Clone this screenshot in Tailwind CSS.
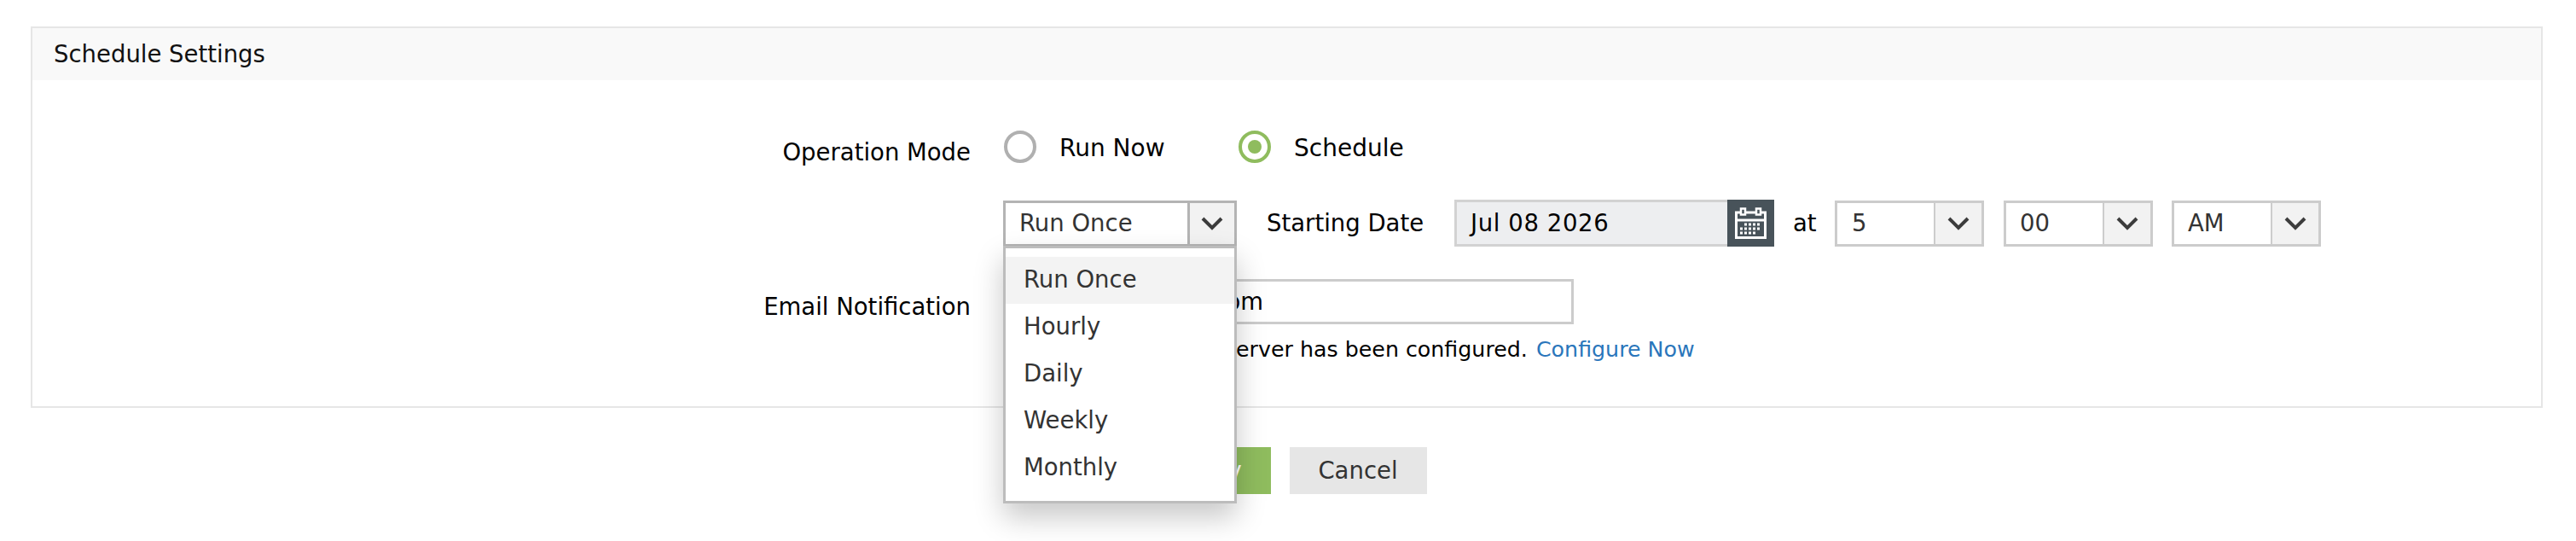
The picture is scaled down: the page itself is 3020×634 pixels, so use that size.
<!doctype html>
<html>
<head>
<meta charset="utf-8">
<script src="https://cdn.jsdelivr.net/npm/@tailwindcss/browser@4"></script>
</head>
<body class="bg-white font-['DejaVu_Sans',sans-serif] text-[27.5px] text-black overflow-hidden">
<div class="pl-[36px] pr-[39px] pt-[31px] h-[634px]">
  <section class="border-2 border-[#e6e6e6] h-[447px]">
    <header class="h-[61px] bg-[#f9f9f9] pl-[25px] flex items-center text-[#111]">Schedule Settings</header>
    <div class="grid grid-cols-[1100px_1fr] gap-x-[38px] pt-[59px]">
      <div class="text-right pt-[7px] h-[38px] leading-[36px]">Operation Mode</div>
      <div class="flex items-center h-[38px] pl-[1px]">
        <span class="w-[38px] h-[38px] rounded-full border-[4px] border-[#b0b0b0]"></span>
        <span class="ml-[27px] w-[210px] text-[28px] pt-[3px]">Run Now</span>
        <span class="w-[38px] h-[38px] rounded-full border-[4px] border-[#8fbc5e] flex items-center justify-center"><span class="w-[16px] h-[16px] rounded-full bg-[#8fbc5e]"></span></span>
        <span class="ml-[27px] text-[28px] pt-[3px]">Schedule</span>
      </div>

      <div></div>
      <div class="flex items-center h-[55px] mt-[43px]">
        <div class="relative w-[274px] h-[54px]">
          <div class="flex w-full h-full border-[3px] border-[#b4b4b4] text-[#333]">
            <span class="flex-1 pl-[16px] flex items-center">Run Once</span>
            <span class="w-[55px] border-l-[3px] border-[#b4b4b4] bg-[#f2f2f2] flex items-center justify-center">
              <svg width="26" height="16" viewBox="0 0 26 16" fill="none" stroke="#3c3c3c" stroke-width="4"><path d="M2 2l11 11L24 2"/></svg>
            </span>
          </div>
          <ul class="absolute z-10 left-0 top-[53px] w-[274px] h-[302px] bg-white border-[3px] border-[#bcbcbc] pt-[10px] text-[#333] shadow-[0_16px_32px_rgba(0,0,0,0.22)]">
            <li class="h-[55px] pl-[21px] flex items-center bg-[#f3f3f3]">Run Once</li>
            <li class="h-[55px] pl-[21px] flex items-center">Hourly</li>
            <li class="h-[55px] pl-[21px] flex items-center">Daily</li>
            <li class="h-[55px] pl-[21px] flex items-center">Weekly</li>
            <li class="h-[55px] pl-[21px] flex items-center">Monthly</li>
          </ul>
        </div>
        <span class="ml-[35px] w-[220px]">Starting Date</span>
        <div class="flex w-[375px] h-[55px]">
          <span class="w-[320px] bg-[#edeef0] border-[3px] border-r-0 border-[#d2d2d2] pl-[16px] flex items-center tracking-[0.6px]">Jul 08 2026</span>
          <span class="w-[55px] bg-[#48535a] flex items-center justify-center">
            <svg width="37" height="37" viewBox="0 0 37 37" fill="none" stroke="#fff">
              <path stroke-width="3" d="M6.5 6H1.5v29.5h34V6h-5M12.5 6h12"/>
              <path stroke-width="2.5" d="M7 1.5h5v7H7zM25 1.5h5v7h-5z"/>
              <path stroke-width="3" d="M1.5 15h34"/>
              <path stroke-width="3" stroke-dasharray="3 2" d="M11 20h20M6 25h25M6 30h20"/>
            </svg>
          </span>
        </div>
        <span class="ml-[22px] w-[49px]">at</span>
        <div class="flex w-[175px] h-[54px] border-[3px] border-[#cccccc] text-[#333]">
          <span class="flex-1 pl-[17px] flex items-center">5</span>
          <span class="w-[56px] border-l-2 border-[#cccccc] bg-[#f2f2f2] flex items-center justify-center">
            <svg width="26" height="16" viewBox="0 0 26 16" fill="none" stroke="#3c3c3c" stroke-width="4"><path d="M2 2l11 11L24 2"/></svg>
          </span>
        </div>
        <div class="flex ml-[23px] w-[175px] h-[54px] border-[3px] border-[#cccccc] text-[#333]">
          <span class="flex-1 pl-[16px] flex items-center">00</span>
          <span class="w-[56px] border-l-2 border-[#cccccc] bg-[#f2f2f2] flex items-center justify-center">
            <svg width="26" height="16" viewBox="0 0 26 16" fill="none" stroke="#3c3c3c" stroke-width="4"><path d="M2 2l11 11L24 2"/></svg>
          </span>
        </div>
        <div class="flex ml-[22px] w-[175px] h-[54px] border-[3px] border-[#cccccc] text-[#333]">
          <span class="flex-1 pl-[16px] flex items-center">AM</span>
          <span class="w-[56px] border-l-2 border-[#cccccc] bg-[#f2f2f2] flex items-center justify-center">
            <svg width="26" height="16" viewBox="0 0 26 16" fill="none" stroke="#3c3c3c" stroke-width="4"><path d="M2 2l11 11L24 2"/></svg>
          </span>
        </div>
      </div>

      <div class="text-right mt-[38px] pt-[17px] leading-[30px]">Email Notification</div>
      <div class="mt-[38px]">
        <div class="w-[669px] h-[53px] border-[3px] border-[#cccccc] pl-[18px] flex items-center">admin@domain.com</div>
        <p class="mt-[15px] text-[25.3px] leading-[30px] pl-[7px]">Can't send mail, no server has been configured. <a class="text-[#2a76bb] ml-[2px]">Configure Now</a></p>
      </div>
    </div>
  </section>
  <div class="flex justify-center gap-[22px] mt-[46px]">
    <button class="w-[145px] h-[55px] bg-[#8fbc5e] text-white">Apply</button>
    <button class="w-[161px] h-[55px] bg-[#e6e6e6] text-[#333]">Cancel</button>
  </div>
</div>
</body>
</html>
